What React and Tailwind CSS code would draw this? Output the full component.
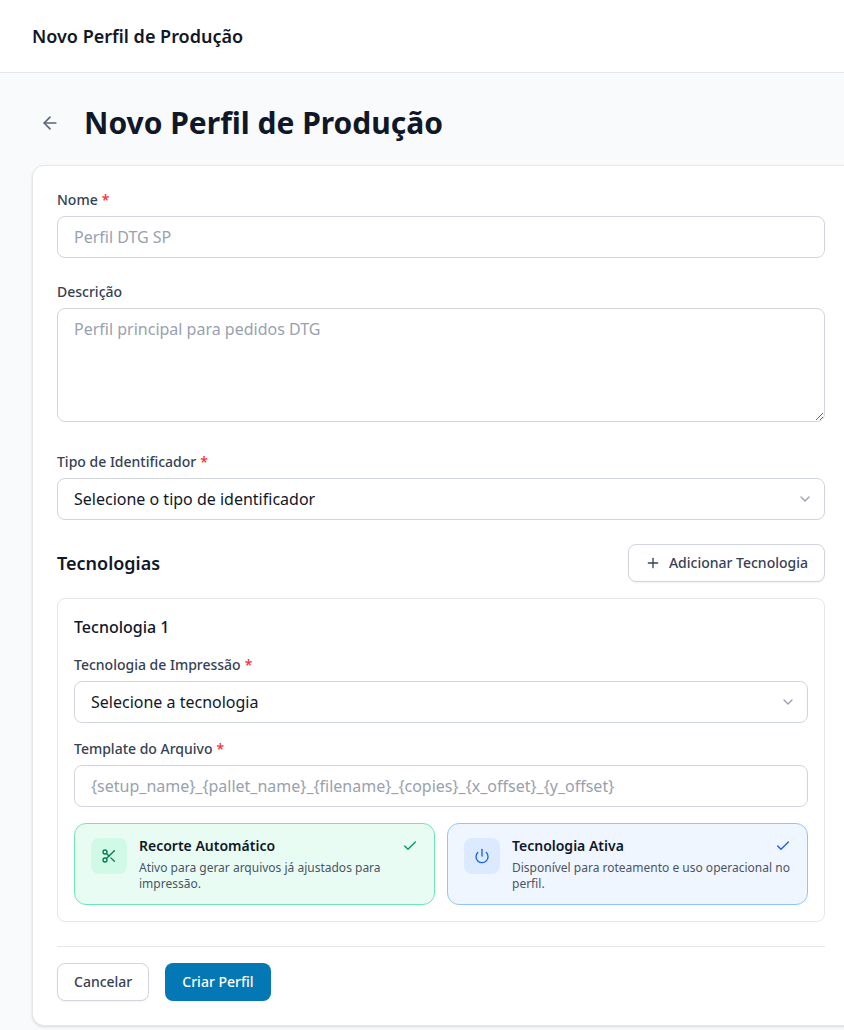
import React from 'react';
import { ArrowLeft, Plus, ChevronDown, Scissors, Power, Check } from 'lucide-react';

const Label = ({ children, required }) => (
  <label className="block text-sm leading-5 font-medium text-gray-700 mb-1.5">
    {children}
    {required && <span className="ml-1 text-red-500">*</span>}
  </label>
);

const inputClass = "block w-full h-[42px] px-4 bg-white border border-gray-300 rounded-lg text-base text-gray-900 placeholder:text-gray-400 focus:outline-none";

const SelectField = ({ placeholder }) => (
  <div className="relative">
    <select className={`${inputClass} appearance-none`} defaultValue="">
      <option value="">{placeholder}</option>
    </select>
    <ChevronDown className="absolute right-3 top-[13px] w-4 h-4 text-gray-400 pointer-events-none" />
  </div>
);

const ToggleCard = ({ icon: Icon, title, text, cardClass, iconClass, checkClass }) => (
  <div className={`flex items-start gap-3 px-4 pt-[14px] h-[82px] rounded-xl border ${cardClass}`}>
    <div className={`flex items-center justify-center shrink-0 w-9 h-9 rounded-lg ${iconClass}`}>
      <Icon className="w-4 h-4" />
    </div>
    <div className="flex-1 min-w-0">
      <div className="flex items-start justify-between">
        <span className="text-sm leading-4 font-semibold text-gray-900">{title}</span>
        <Check className={`w-4 h-4 shrink-0 ${checkClass}`} />
      </div>
      <p className="mt-1.5 text-xs leading-4 text-gray-600">{text}</p>
    </div>
  </div>
);

const App = () => {
  return (
    <div className="h-[1030px] overflow-hidden bg-gray-50 font-['Noto_Sans',sans-serif]">
      <header className="h-[73px] flex items-center px-8 bg-white border-b border-gray-200">
        <h2 className="text-lg font-semibold text-gray-900">Novo Perfil de Produção</h2>
      </header>

      <main className="px-8 pt-[25px] w-[960px]">
        <div className="flex items-center gap-4 h-[50px] mb-[17px]">
          <button type="button" className="p-2 text-[#5c6577]">
            <ArrowLeft className="w-5 h-5" />
          </button>
          <h1 className="text-3xl font-bold text-gray-900">Novo Perfil de Produção</h1>
        </div>

        {/* card runs past the right edge of the window, the content stays 768 wide */}
        <form className="bg-white border border-gray-200 rounded-xl shadow-sm p-6">
          <div className="w-[768px]">
            <div className="mb-6">
              <Label required>Nome</Label>
              <input type="text" placeholder="Perfil DTG SP" className={inputClass} />
            </div>

            <div className="mb-[30px]">
              <Label>Descrição</Label>
              <textarea
                placeholder="Perfil principal para pedidos DTG"
                className="block w-full h-[114px] px-4 py-2 bg-white border border-gray-300 rounded-lg text-base text-gray-900 placeholder:text-gray-400 focus:outline-none"
              />
            </div>

            <div className="mb-6">
              <Label required>Tipo de Identificador</Label>
              <SelectField placeholder="Selecione o tipo de identificador" />
            </div>

            <div className="flex items-center justify-between mb-4">
              <h3 className="text-lg font-semibold text-gray-900">Tecnologias</h3>
              <button
                type="button"
                className="flex items-center gap-2 h-[38px] px-4 bg-white border border-gray-300 rounded-lg shadow-xs text-sm font-medium text-gray-700"
              >
                <Plus className="w-4 h-4" />
                Adicionar Tecnologia
              </button>
            </div>

            <div className="border border-gray-200 rounded-lg p-4">
              <h4 className="text-base leading-6 font-medium text-gray-900 mb-4">Tecnologia 1</h4>

              <div className="mb-4">
                <Label required>Tecnologia de Impressão</Label>
                <SelectField placeholder="Selecione a tecnologia" />
              </div>

              <div className="mb-4">
                <Label required>Template do Arquivo</Label>
                <input
                  type="text"
                  placeholder="{setup_name}_{pallet_name}_{filename}_{copies}_{x_offset}_{y_offset}"
                  className={inputClass}
                />
              </div>

              <div className="grid grid-cols-2 gap-3">
                <ToggleCard
                  icon={Scissors}
                  title="Recorte Automático"
                  text="Ativo para gerar arquivos já ajustados para impressão."
                  cardClass="bg-[#e9fcf3] border-[#6ee7b7]"
                  iconClass="bg-emerald-100 text-emerald-700"
                  checkClass="text-emerald-600"
                />
                <ToggleCard
                  icon={Power}
                  title="Tecnologia Ativa"
                  text="Disponível para roteamento e uso operacional no perfil."
                  cardClass="bg-blue-50 border-blue-300"
                  iconClass="bg-blue-100 text-blue-600"
                  checkClass="text-blue-600"
                />
              </div>
            </div>

            <div className="flex gap-4 mt-6 pt-4 border-t border-gray-200">
              <button
                type="button"
                className="h-[38px] px-4 bg-white border border-gray-300 rounded-lg shadow-xs text-sm font-medium text-gray-700"
              >
                Cancelar
              </button>
              <button
                type="submit"
                className="h-[38px] px-[17px] bg-[#0477b5] rounded-lg text-sm font-medium text-white"
              >
                Criar Perfil
              </button>
            </div>
          </div>
        </form>
      </main>
    </div>
  );
};

export default App;
